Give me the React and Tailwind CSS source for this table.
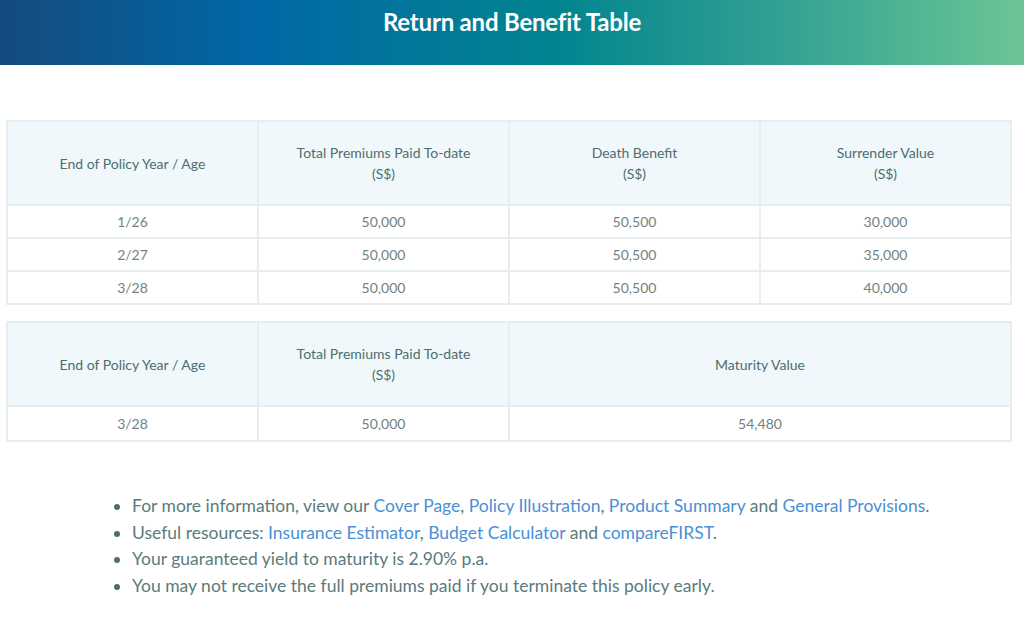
import React from 'react';

const rows = [
  { age: '1/26', paid: '50,000', death: '50,500', surrender: '30,000' },
  { age: '2/27', paid: '50,000', death: '50,500', surrender: '35,000' },
  { age: '3/28', paid: '50,000', death: '50,500', surrender: '40,000' },
];

const th = 'border-2 border-[#e8edf0] bg-[#f0f8fb] font-normal text-[#4d6d6e] text-[14px] leading-[21px] h-[84px] px-3 align-middle';
const td = 'border-2 border-[#e8edf0] text-[#718283] text-[14px] h-[33px] px-3 align-middle';
const link = 'text-[#4b8fd6]';

export default function App() {
  return (
    <div className="min-h-screen bg-white" style={{ fontFamily: 'Lato, "Noto Sans", sans-serif' }}>
      {/* Header */}
      <div className="h-[65px] flex justify-center pt-[6px] bg-[linear-gradient(90deg,#154a7e_0%,#0068a6_25%,#03858f_55%,#2f9f92_75%,#6cc595_100%)]">
        <h1 className="text-white text-[24px] font-bold leading-[32px] tracking-[-0.2px]">Return and Benefit Table</h1>
      </div>

      <div className="pl-[6px] pr-[12px] pt-[55px]">
        {/* Table 1 */}
        <table className="w-full table-fixed border-collapse text-center">
          <thead>
            <tr>
              <th className={th}>End of Policy Year / Age</th>
              <th className={th}>Total Premiums Paid To-date<br />(S$)</th>
              <th className={th}>Death Benefit<br />(S$)</th>
              <th className={th}>Surrender Value<br />(S$)</th>
            </tr>
          </thead>
          <tbody>
            {rows.map((r) => (
              <tr key={r.age}>
                <td className={td}>{r.age}</td>
                <td className={td}>{r.paid}</td>
                <td className={td}>{r.death}</td>
                <td className={td}>{r.surrender}</td>
              </tr>
            ))}
          </tbody>
        </table>

        {/* Table 2 */}
        <table className="w-full table-fixed border-collapse text-center mt-[16px]">
          <colgroup>
            <col className="w-1/4" />
            <col className="w-1/4" />
            <col className="w-1/2" />
          </colgroup>
          <thead>
            <tr>
              <th className={th}>End of Policy Year / Age</th>
              <th className={th}>Total Premiums Paid To-date<br />(S$)</th>
              <th className={th}>Maturity Value</th>
            </tr>
          </thead>
          <tbody>
            <tr>
              <td className={`${td} h-[35px]`}>3/28</td>
              <td className={`${td} h-[35px]`}>50,000</td>
              <td className={`${td} h-[35px]`}>54,480</td>
            </tr>
          </tbody>
        </table>

        {/* Notes */}
        <ul className="mt-[51px] ml-[106px] text-[17.5px] leading-[26.7px] text-[#5a7b7c] list-disc pl-[20px] marker:text-[#4d6d6e]">
          <li>
            For more information, view our <span className={link}>Cover Page</span>,{' '}
            <span className={link}>Policy Illustration</span>, <span className={link}>Product Summary</span> and{' '}
            <span className={link}>General Provisions</span>.
          </li>
          <li>
            Useful resources: <span className={link}>Insurance Estimator</span>,{' '}
            <span className={link}>Budget Calculator</span> and <span className={link}>compareFIRST</span>.
          </li>
          <li>Your guaranteed yield to maturity is 2.90% p.a.</li>
          <li>You may not receive the full premiums paid if you terminate this policy early.</li>
        </ul>
      </div>
    </div>
  );
}
